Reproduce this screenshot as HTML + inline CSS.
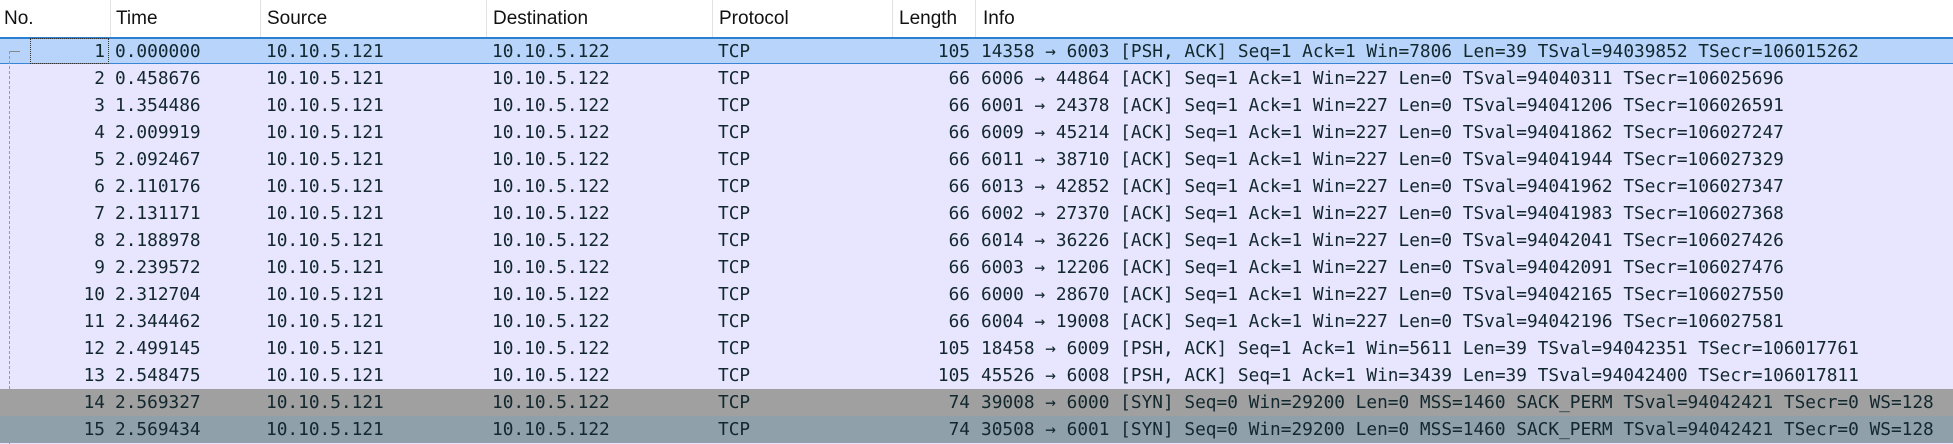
<!DOCTYPE html>
<html><head><meta charset="utf-8"><style>
body{margin:0;width:1953px;height:444px;overflow:hidden;background:#e7e6fe;position:relative;font-family:"DejaVu Sans Mono","Liberation Mono",monospace;}
.hdr{position:absolute;left:0;top:0;width:1953px;height:37px;background:#fff;border-bottom:2px solid #2a7fd0;font-family:"Liberation Sans",sans-serif;font-size:19px;color:#111;}
.hdr span{position:absolute;top:8px;}
.sep{position:absolute;top:0;width:1px;height:37px;background:#e2e2e2;}
.row{position:absolute;left:0;width:1953px;height:27px;color:#12272e;font-size:17.8px;font-family:"DejaVu Sans Mono","Liberation Mono",monospace;}
.row span{position:absolute;top:3px;white-space:pre;}
.n{right:1848px;text-align:right}
.t{left:115px}.s{left:266px}.d{left:492px}.p{left:718px}
.l{right:983px;text-align:right}.i{left:981px}
</style></head><body>
<div class="hdr">
<span style="left:4px">No.</span><span style="left:116px">Time</span><span style="left:267px">Source</span><span style="left:493px">Destination</span><span style="left:719px">Protocol</span><span style="left:899px">Length</span><span style="left:983px">Info</span>
<div class="sep" style="left:110px"></div><div class="sep" style="left:260px"></div><div class="sep" style="left:486px"></div><div class="sep" style="left:712px"></div><div class="sep" style="left:892px"></div><div class="sep" style="left:975px"></div>
</div>
<div style="position:absolute;left:0;top:39px;width:1953px;height:24px;background:#b8d4fb;border-bottom:1px solid #3a86d6"></div>
<div style="position:absolute;left:30px;top:38px;width:77px;height:24px;border:1px dotted #333"></div>
<div style="position:absolute;left:9px;top:51px;width:11px;height:1px;background:#888"></div>
<div style="position:absolute;left:9px;top:51px;width:0;height:393px;border-left:1px dashed #999"></div>
<div style="position:absolute;left:0;top:389px;width:1953px;height:27px;background:#a0a0a0"></div>
<div style="position:absolute;left:0;top:416px;width:1953px;height:27px;background:#8fa0ab"></div>
<div id="rows"></div>
<script>
var d=[
["1","0.000000","105","14358 → 6003 [PSH, ACK] Seq=1 Ack=1 Win=7806 Len=39 TSval=94039852 TSecr=106015262"],
["2","0.458676","66","6006 → 44864 [ACK] Seq=1 Ack=1 Win=227 Len=0 TSval=94040311 TSecr=106025696"],
["3","1.354486","66","6001 → 24378 [ACK] Seq=1 Ack=1 Win=227 Len=0 TSval=94041206 TSecr=106026591"],
["4","2.009919","66","6009 → 45214 [ACK] Seq=1 Ack=1 Win=227 Len=0 TSval=94041862 TSecr=106027247"],
["5","2.092467","66","6011 → 38710 [ACK] Seq=1 Ack=1 Win=227 Len=0 TSval=94041944 TSecr=106027329"],
["6","2.110176","66","6013 → 42852 [ACK] Seq=1 Ack=1 Win=227 Len=0 TSval=94041962 TSecr=106027347"],
["7","2.131171","66","6002 → 27370 [ACK] Seq=1 Ack=1 Win=227 Len=0 TSval=94041983 TSecr=106027368"],
["8","2.188978","66","6014 → 36226 [ACK] Seq=1 Ack=1 Win=227 Len=0 TSval=94042041 TSecr=106027426"],
["9","2.239572","66","6003 → 12206 [ACK] Seq=1 Ack=1 Win=227 Len=0 TSval=94042091 TSecr=106027476"],
["10","2.312704","66","6000 → 28670 [ACK] Seq=1 Ack=1 Win=227 Len=0 TSval=94042165 TSecr=106027550"],
["11","2.344462","66","6004 → 19008 [ACK] Seq=1 Ack=1 Win=227 Len=0 TSval=94042196 TSecr=106027581"],
["12","2.499145","105","18458 → 6009 [PSH, ACK] Seq=1 Ack=1 Win=5611 Len=39 TSval=94042351 TSecr=106017761"],
["13","2.548475","105","45526 → 6008 [PSH, ACK] Seq=1 Ack=1 Win=3439 Len=39 TSval=94042400 TSecr=106017811"],
["14","2.569327","74","39008 → 6000 [SYN] Seq=0 Win=29200 Len=0 MSS=1460 SACK_PERM TSval=94042421 TSecr=0 WS=128"],
["15","2.569434","74","30508 → 6001 [SYN] Seq=0 Win=29200 Len=0 MSS=1460 SACK_PERM TSval=94042421 TSecr=0 WS=128"]];
var h="";d.forEach(function(r,k){h+='<div class="row" style="top:'+(38+k*27)+'px"><span class="n">'+r[0]+'</span><span class="t">'+r[1]+'</span><span class="s">10.10.5.121</span><span class="d">10.10.5.122</span><span class="p">TCP</span><span class="l">'+r[2]+'</span><span class="i">'+r[3]+'</span></div>';});
document.getElementById("rows").innerHTML=h;
</script>
</body></html>
